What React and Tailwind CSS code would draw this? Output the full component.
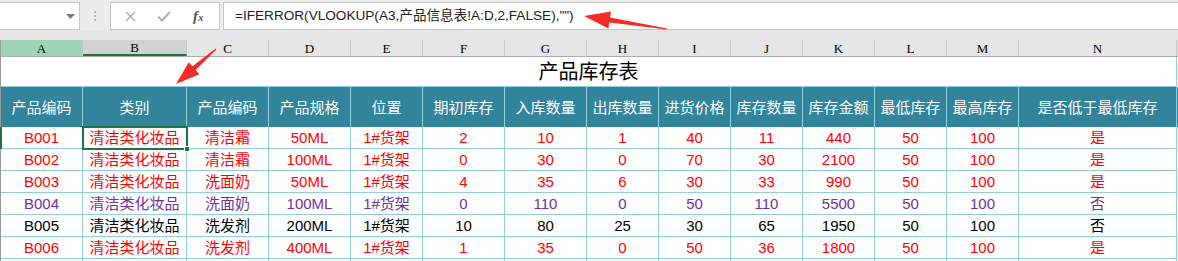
import React from "react";

const GRID =
  "grid grid-cols-[82px_104px_82px_82px_72px_82px_82px_72px_72px_72px_72px_72px_72px_158px]";

const letters = ["A", "B", "C", "D", "E", "F", "G", "H", "I", "J", "K", "L", "M", "N"];
const heads = [
  "产品编码", "类别", "产品编码", "产品规格", "位置", "期初库存", "入库数量",
  "出库数量", "进货价格", "库存数量", "库存金额", "最低库存", "最高库存", "是否低于最低库存",
];

const rows = [
  { c: "text-[#ff0000]", d: ["B001", "清洁类化妆品", "清洁霜", "50ML", "1#货架", "2", "10", "1", "40", "11", "440", "50", "100", "是"] },
  { c: "text-[#ff0000]", d: ["B002", "清洁类化妆品", "清洁霜", "100ML", "1#货架", "0", "30", "0", "70", "30", "2100", "50", "100", "是"] },
  { c: "text-[#ff0000]", d: ["B003", "清洁类化妆品", "洗面奶", "50ML", "1#货架", "4", "35", "6", "30", "33", "990", "50", "100", "是"] },
  { c: "text-[#7030a0]", d: ["B004", "清洁类化妆品", "洗面奶", "100ML", "1#货架", "0", "110", "0", "50", "110", "5500", "50", "100", "否"] },
  { c: "text-black", d: ["B005", "清洁类化妆品", "洗发剂", "200ML", "1#货架", "10", "80", "25", "30", "65", "1950", "50", "100", "否"] },
  { c: "text-[#ff0000]", d: ["B006", "清洁类化妆品", "洗发剂", "400ML", "1#货架", "1", "35", "0", "50", "36", "1800", "50", "100", "是"] },
];

function arrowPts(x1, y1, x2, y2, headLen, headW, w0, w1) {
  const L = Math.hypot(x2 - x1, y2 - y1);
  const ux = (x2 - x1) / L;
  const uy = (y2 - y1) / L;
  const nx = -uy;
  const ny = ux;
  const bx = x2 - ux * headLen;
  const by = y2 - uy * headLen;
  const p = [
    [x1 + nx * w0 / 2, y1 + ny * w0 / 2],
    [bx + nx * w1 / 2, by + ny * w1 / 2],
    [bx + nx * headW / 2, by + ny * headW / 2],
    [x2, y2],
    [bx - nx * headW / 2, by - ny * headW / 2],
    [bx - nx * w1 / 2, by - ny * w1 / 2],
    [x1 - nx * w0 / 2, y1 - ny * w0 / 2],
  ];
  return p.map((q) => q[0].toFixed(1) + "," + q[1].toFixed(1)).join(" ");
}

const FONT = "font-['Liberation_Sans','Noto_Sans_CJK_SC',sans-serif]";

export default function App() {
  return (
    <div className={`relative w-[1178px] h-[261px] overflow-hidden bg-white ${FONT}`}>
      {/* formula bar */}
      <div className="flex h-[30px] pt-[2px] bg-[#ececec]">
        <div className="relative w-[80px] h-[28px] bg-white border border-l-0 border-[#c6c6c6]">
          <svg className="absolute left-[66px] top-[11px]" width="9" height="5" viewBox="0 0 9 5">
            <polygon points="0,0 9,0 4.5,5" fill="#7a7a7a" />
          </svg>
        </div>
        <div className="w-[30px] h-[28px] flex flex-col items-center justify-center gap-[2px]">
          <div className="w-[2px] h-[2px] bg-[#b4b4b4]" />
          <div className="w-[2px] h-[2px] bg-[#b4b4b4]" />
          <div className="w-[2px] h-[2px] bg-[#b4b4b4]" />
        </div>
        <div className="relative w-[110px] h-[28px] bg-white border border-[#c6c6c6]">
          <svg className="absolute left-[14px] top-[8px]" width="11" height="11" viewBox="0 0 11 11">
            <path d="M1 1 L10 10 M10 1 L1 10" stroke="#a8a8a8" strokeWidth="1.3" fill="none" />
          </svg>
          <svg className="absolute left-[46px] top-[8px]" width="14" height="11" viewBox="0 0 14 11">
            <path d="M1 5.5 L5 9.5 L13 1" stroke="#b0b0b0" strokeWidth="2" fill="none" />
          </svg>
          <span className="absolute left-[82px] top-[3px] font-['Liberation_Serif',serif] italic font-bold text-[15px] leading-[20px] text-[#555]">
            f<span className="text-[11px]">x</span>
          </span>
        </div>
        <div className="w-[3px]" />
        <div className="flex-1 h-[28px] bg-white border border-r-0 border-[#c6c6c6] flex items-center pl-[11px] text-[13.6px] text-[#222] leading-none">
          =IFERROR(VLOOKUP(A3,产品信息表!A:D,2,FALSE),"")
        </div>
      </div>
      <div className="h-[10px] bg-[#e6e6e6]" />

      {/* column letters */}
      <div className={`${GRID} h-[17px] bg-[#e6e6e6] border-l border-[#9b9b9b] border-b border-b-[#ababab]`}>
        {letters.map((l, i) => (
          <div
            key={l}
            className={
              "flex items-center justify-center font-['Liberation_Serif',serif] text-[13px] leading-none text-black border-r border-[#c8c8c8] " +
              (i === 0 ? "bg-[#9fd5b7]" : i === 1 ? "bg-[#d2d2d2] border-b-2 border-b-[#217346]" : "")
            }
          >
            {l}
          </div>
        ))}
      </div>

      {/* sheet */}
      <div className="relative">
        <div className="border-l border-[#9b9b9b]">
          <div className="h-[30px] flex items-center justify-center w-[1176px] border-r border-b border-[#92cddc] text-[20px] text-black leading-none">
            产品库存表
          </div>
          <div className={`${GRID} h-[40px] bg-[#31849b]`}>
            {heads.map((h, i) => (
              <div key={i} className="flex items-center justify-center border-r border-[#92cddc] text-white text-[15px] leading-none whitespace-nowrap">
                {h}
              </div>
            ))}
          </div>
          {rows.map((r, ri) => (
            <div key={ri} className={`${GRID} h-[22px] ${r.c}`}>
              {r.d.map((v, i) => (
                <div key={i} className="flex items-center justify-center border-r border-b border-[#92cddc] text-[15px] leading-none whitespace-nowrap">
                  {v}
                </div>
              ))}
            </div>
          ))}
          <div className={`${GRID} h-[10px]`}>
            {letters.map((l) => (
              <div key={l} className="border-r border-[#92cddc]" />
            ))}
          </div>
        </div>
        {/* row-1 left edge highlight */}
        <div className="absolute left-0 top-[70px] w-[2px] h-[22px] bg-[#217346]" />
        {/* selected cell */}
        <div className="absolute left-[82px] top-[69px] w-[106px] h-[24px] border-2 border-[#217346]" />
        <div className="absolute left-[184px] top-[89px] w-[6px] h-[6px] bg-[#217346] border border-white" />
      </div>

      {/* annotation arrows */}
      <svg className="absolute left-0 top-0 pointer-events-none" width="1178" height="261" viewBox="0 0 1178 261">
        <polygon points={arrowPts(667, 29, 584, 16, 26, 17, 1, 5)} fill="#f52b2b" />
        <polygon points={arrowPts(216, 49, 176, 84, 24, 16, 1, 5)} fill="#f52b2b" />
      </svg>
    </div>
  );
}
